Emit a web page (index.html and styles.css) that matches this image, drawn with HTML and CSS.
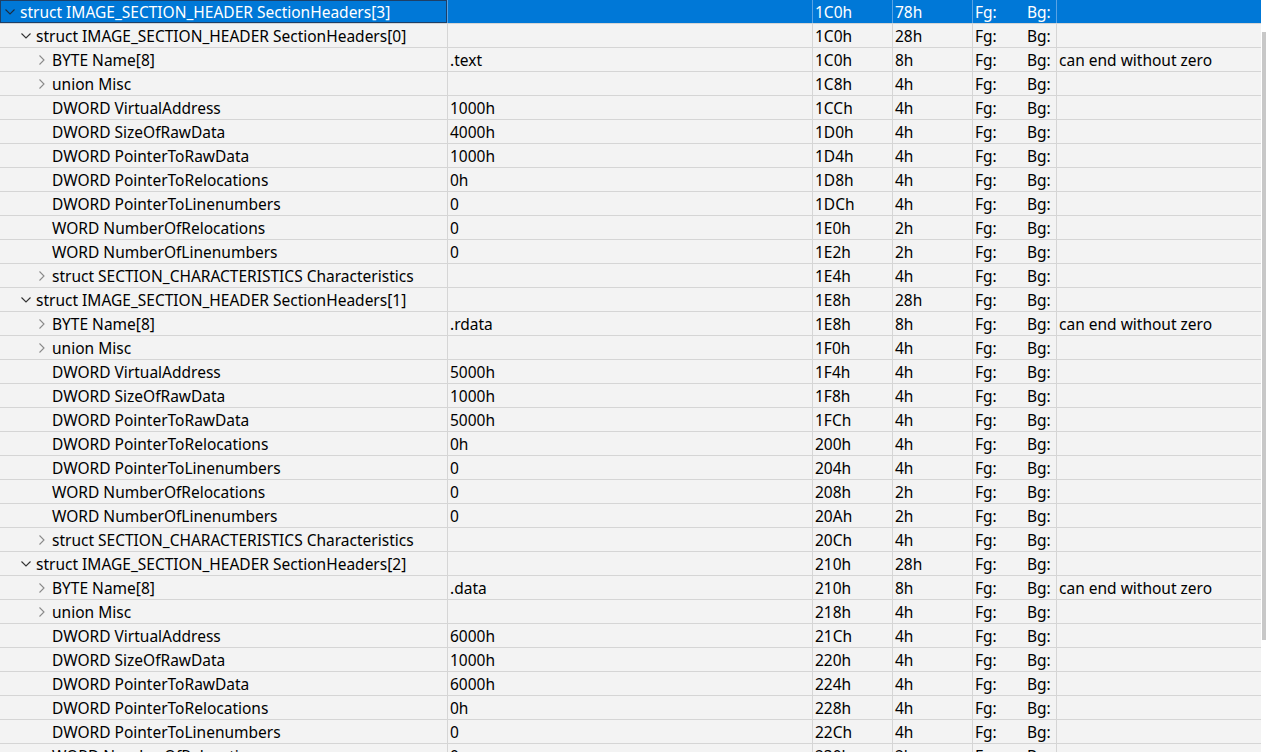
FILE: index.html
```html
<!DOCTYPE html>
<html>
<head>
<meta charset="utf-8">
<link rel="stylesheet" href="styles.css">
</head>
<body>
<div class="view">
  <div class="tree">
    <div class="row sel">
      <div class="c name l0 focus"><span class="tw"><svg width="10" height="6" viewBox="0 0 10 6"><polyline class="dn" points="0.5,0.5 5,5 9.5,0.5"/></svg></span>struct IMAGE_SECTION_HEADER SectionHeaders[3]</div>
      <div class="c val"></div><div class="c off">1C0h</div><div class="c sz">78h</div><div class="c col"><span class="fg">Fg:</span><span>Bg:</span></div><div class="c cmt"></div>
    </div>

    <div class="row"><div class="c name l1"><span class="tw"><svg width="10" height="6" viewBox="0 0 10 6"><polyline class="dn" points="0.5,0.5 5,5 9.5,0.5"/></svg></span>struct IMAGE_SECTION_HEADER SectionHeaders[0]</div><div class="c val"></div><div class="c off">1C0h</div><div class="c sz">28h</div><div class="c col"><span class="fg">Fg:</span><span>Bg:</span></div><div class="c cmt"></div></div>
    <div class="row"><div class="c name l2"><span class="tw"><svg width="6" height="10" viewBox="0 0 6 10"><polyline class="rt" points="0.5,0.5 5,5 0.5,9.5"/></svg></span>BYTE Name[8]</div><div class="c val">.text</div><div class="c off">1C0h</div><div class="c sz">8h</div><div class="c col"><span class="fg">Fg:</span><span>Bg:</span></div><div class="c cmt">can end without zero</div></div>
    <div class="row"><div class="c name l2"><span class="tw"><svg width="6" height="10" viewBox="0 0 6 10"><polyline class="rt" points="0.5,0.5 5,5 0.5,9.5"/></svg></span>union Misc</div><div class="c val"></div><div class="c off">1C8h</div><div class="c sz">4h</div><div class="c col"><span class="fg">Fg:</span><span>Bg:</span></div><div class="c cmt"></div></div>
    <div class="row"><div class="c name l2"><span class="tw"></span>DWORD VirtualAddress</div><div class="c val">1000h</div><div class="c off">1CCh</div><div class="c sz">4h</div><div class="c col"><span class="fg">Fg:</span><span>Bg:</span></div><div class="c cmt"></div></div>
    <div class="row"><div class="c name l2"><span class="tw"></span>DWORD SizeOfRawData</div><div class="c val">4000h</div><div class="c off">1D0h</div><div class="c sz">4h</div><div class="c col"><span class="fg">Fg:</span><span>Bg:</span></div><div class="c cmt"></div></div>
    <div class="row"><div class="c name l2"><span class="tw"></span>DWORD PointerToRawData</div><div class="c val">1000h</div><div class="c off">1D4h</div><div class="c sz">4h</div><div class="c col"><span class="fg">Fg:</span><span>Bg:</span></div><div class="c cmt"></div></div>
    <div class="row"><div class="c name l2"><span class="tw"></span>DWORD PointerToRelocations</div><div class="c val">0h</div><div class="c off">1D8h</div><div class="c sz">4h</div><div class="c col"><span class="fg">Fg:</span><span>Bg:</span></div><div class="c cmt"></div></div>
    <div class="row"><div class="c name l2"><span class="tw"></span>DWORD PointerToLinenumbers</div><div class="c val">0</div><div class="c off">1DCh</div><div class="c sz">4h</div><div class="c col"><span class="fg">Fg:</span><span>Bg:</span></div><div class="c cmt"></div></div>
    <div class="row"><div class="c name l2"><span class="tw"></span>WORD NumberOfRelocations</div><div class="c val">0</div><div class="c off">1E0h</div><div class="c sz">2h</div><div class="c col"><span class="fg">Fg:</span><span>Bg:</span></div><div class="c cmt"></div></div>
    <div class="row"><div class="c name l2"><span class="tw"></span>WORD NumberOfLinenumbers</div><div class="c val">0</div><div class="c off">1E2h</div><div class="c sz">2h</div><div class="c col"><span class="fg">Fg:</span><span>Bg:</span></div><div class="c cmt"></div></div>
    <div class="row"><div class="c name l2"><span class="tw"><svg width="6" height="10" viewBox="0 0 6 10"><polyline class="rt" points="0.5,0.5 5,5 0.5,9.5"/></svg></span>struct SECTION_CHARACTERISTICS Characteristics</div><div class="c val"></div><div class="c off">1E4h</div><div class="c sz">4h</div><div class="c col"><span class="fg">Fg:</span><span>Bg:</span></div><div class="c cmt"></div></div>

    <div class="row"><div class="c name l1"><span class="tw"><svg width="10" height="6" viewBox="0 0 10 6"><polyline class="dn" points="0.5,0.5 5,5 9.5,0.5"/></svg></span>struct IMAGE_SECTION_HEADER SectionHeaders[1]</div><div class="c val"></div><div class="c off">1E8h</div><div class="c sz">28h</div><div class="c col"><span class="fg">Fg:</span><span>Bg:</span></div><div class="c cmt"></div></div>
    <div class="row"><div class="c name l2"><span class="tw"><svg width="6" height="10" viewBox="0 0 6 10"><polyline class="rt" points="0.5,0.5 5,5 0.5,9.5"/></svg></span>BYTE Name[8]</div><div class="c val">.rdata</div><div class="c off">1E8h</div><div class="c sz">8h</div><div class="c col"><span class="fg">Fg:</span><span>Bg:</span></div><div class="c cmt">can end without zero</div></div>
    <div class="row"><div class="c name l2"><span class="tw"><svg width="6" height="10" viewBox="0 0 6 10"><polyline class="rt" points="0.5,0.5 5,5 0.5,9.5"/></svg></span>union Misc</div><div class="c val"></div><div class="c off">1F0h</div><div class="c sz">4h</div><div class="c col"><span class="fg">Fg:</span><span>Bg:</span></div><div class="c cmt"></div></div>
    <div class="row"><div class="c name l2"><span class="tw"></span>DWORD VirtualAddress</div><div class="c val">5000h</div><div class="c off">1F4h</div><div class="c sz">4h</div><div class="c col"><span class="fg">Fg:</span><span>Bg:</span></div><div class="c cmt"></div></div>
    <div class="row"><div class="c name l2"><span class="tw"></span>DWORD SizeOfRawData</div><div class="c val">1000h</div><div class="c off">1F8h</div><div class="c sz">4h</div><div class="c col"><span class="fg">Fg:</span><span>Bg:</span></div><div class="c cmt"></div></div>
    <div class="row"><div class="c name l2"><span class="tw"></span>DWORD PointerToRawData</div><div class="c val">5000h</div><div class="c off">1FCh</div><div class="c sz">4h</div><div class="c col"><span class="fg">Fg:</span><span>Bg:</span></div><div class="c cmt"></div></div>
    <div class="row"><div class="c name l2"><span class="tw"></span>DWORD PointerToRelocations</div><div class="c val">0h</div><div class="c off">200h</div><div class="c sz">4h</div><div class="c col"><span class="fg">Fg:</span><span>Bg:</span></div><div class="c cmt"></div></div>
    <div class="row"><div class="c name l2"><span class="tw"></span>DWORD PointerToLinenumbers</div><div class="c val">0</div><div class="c off">204h</div><div class="c sz">4h</div><div class="c col"><span class="fg">Fg:</span><span>Bg:</span></div><div class="c cmt"></div></div>
    <div class="row"><div class="c name l2"><span class="tw"></span>WORD NumberOfRelocations</div><div class="c val">0</div><div class="c off">208h</div><div class="c sz">2h</div><div class="c col"><span class="fg">Fg:</span><span>Bg:</span></div><div class="c cmt"></div></div>
    <div class="row"><div class="c name l2"><span class="tw"></span>WORD NumberOfLinenumbers</div><div class="c val">0</div><div class="c off">20Ah</div><div class="c sz">2h</div><div class="c col"><span class="fg">Fg:</span><span>Bg:</span></div><div class="c cmt"></div></div>
    <div class="row"><div class="c name l2"><span class="tw"><svg width="6" height="10" viewBox="0 0 6 10"><polyline class="rt" points="0.5,0.5 5,5 0.5,9.5"/></svg></span>struct SECTION_CHARACTERISTICS Characteristics</div><div class="c val"></div><div class="c off">20Ch</div><div class="c sz">4h</div><div class="c col"><span class="fg">Fg:</span><span>Bg:</span></div><div class="c cmt"></div></div>

    <div class="row"><div class="c name l1"><span class="tw"><svg width="10" height="6" viewBox="0 0 10 6"><polyline class="dn" points="0.5,0.5 5,5 9.5,0.5"/></svg></span>struct IMAGE_SECTION_HEADER SectionHeaders[2]</div><div class="c val"></div><div class="c off">210h</div><div class="c sz">28h</div><div class="c col"><span class="fg">Fg:</span><span>Bg:</span></div><div class="c cmt"></div></div>
    <div class="row"><div class="c name l2"><span class="tw"><svg width="6" height="10" viewBox="0 0 6 10"><polyline class="rt" points="0.5,0.5 5,5 0.5,9.5"/></svg></span>BYTE Name[8]</div><div class="c val">.data</div><div class="c off">210h</div><div class="c sz">8h</div><div class="c col"><span class="fg">Fg:</span><span>Bg:</span></div><div class="c cmt">can end without zero</div></div>
    <div class="row"><div class="c name l2"><span class="tw"><svg width="6" height="10" viewBox="0 0 6 10"><polyline class="rt" points="0.5,0.5 5,5 0.5,9.5"/></svg></span>union Misc</div><div class="c val"></div><div class="c off">218h</div><div class="c sz">4h</div><div class="c col"><span class="fg">Fg:</span><span>Bg:</span></div><div class="c cmt"></div></div>
    <div class="row"><div class="c name l2"><span class="tw"></span>DWORD VirtualAddress</div><div class="c val">6000h</div><div class="c off">21Ch</div><div class="c sz">4h</div><div class="c col"><span class="fg">Fg:</span><span>Bg:</span></div><div class="c cmt"></div></div>
    <div class="row"><div class="c name l2"><span class="tw"></span>DWORD SizeOfRawData</div><div class="c val">1000h</div><div class="c off">220h</div><div class="c sz">4h</div><div class="c col"><span class="fg">Fg:</span><span>Bg:</span></div><div class="c cmt"></div></div>
    <div class="row"><div class="c name l2"><span class="tw"></span>DWORD PointerToRawData</div><div class="c val">6000h</div><div class="c off">224h</div><div class="c sz">4h</div><div class="c col"><span class="fg">Fg:</span><span>Bg:</span></div><div class="c cmt"></div></div>
    <div class="row"><div class="c name l2"><span class="tw"></span>DWORD PointerToRelocations</div><div class="c val">0h</div><div class="c off">228h</div><div class="c sz">4h</div><div class="c col"><span class="fg">Fg:</span><span>Bg:</span></div><div class="c cmt"></div></div>
    <div class="row"><div class="c name l2"><span class="tw"></span>DWORD PointerToLinenumbers</div><div class="c val">0</div><div class="c off">22Ch</div><div class="c sz">4h</div><div class="c col"><span class="fg">Fg:</span><span>Bg:</span></div><div class="c cmt"></div></div>
    <div class="row"><div class="c name l2"><span class="tw"></span>WORD NumberOfRelocations</div><div class="c val">0</div><div class="c off">230h</div><div class="c sz">2h</div><div class="c col"><span class="fg">Fg:</span><span>Bg:</span></div><div class="c cmt"></div></div>
  </div>
  <div class="thumb"></div>
</div>
</body>
</html>
```
FILE: styles.css
```css
html, body {
  margin: 0;
  padding: 0;
  background: #ffffff;
  overflow: hidden;
}
.view {
  position: relative;
  width: 1266px;
  height: 752px;
  overflow: hidden;
  font-family: "Noto Sans", "Open Sans", sans-serif;
  font-size: 15.5px;
  color: #000;
}
.tree {
  width: 1261px;
  background: #f3f3f3;
}
.row {
  display: grid;
  grid-template-columns: 448px 365px 80px 80px 84px 1fr;
  height: 24px;
  box-sizing: border-box;
  border-bottom: 1px solid #d5d5d5;
}
.c {
  box-sizing: border-box;
  border-right: 1px solid #d5d5d5;
  height: 23px;
  line-height: 24px;
  white-space: nowrap;
  overflow: hidden;
  padding-left: 2px;
}
.c.cmt { border-right: none; }
.name {
  display: flex;
  align-items: center;
  padding-left: 0;
}
.l1 { padding-left: 16px; }
.l2 { padding-left: 32px; }
.tw {
  width: 20px;
  flex: none;
  display: flex;
  align-items: center;
  justify-content: center;
  height: 23px;
}
.tw svg { display: block; }
.dn { fill: none; stroke: #333; stroke-width: 1.1; }
.rt { fill: none; stroke: #8a8a8a; stroke-width: 1.1; }
.col {
  display: flex;
}
.fg { width: 52px; }
.row.sel {
  background: #0078d7;
  color: #fff;
  border-bottom-color: #d5d5d5;
}
.row.sel .c { border-right-color: #5aa3e4; }
.row.sel .dn { stroke: #1c2c40; }
.focus {
  box-shadow: inset 0 0 0 1px #1e3f66;
}
.thumb {
  position: absolute;
  left: 1262px;
  top: 32px;
  width: 4px;
  height: 608px;
  background: #c8c8c8;
}
```
